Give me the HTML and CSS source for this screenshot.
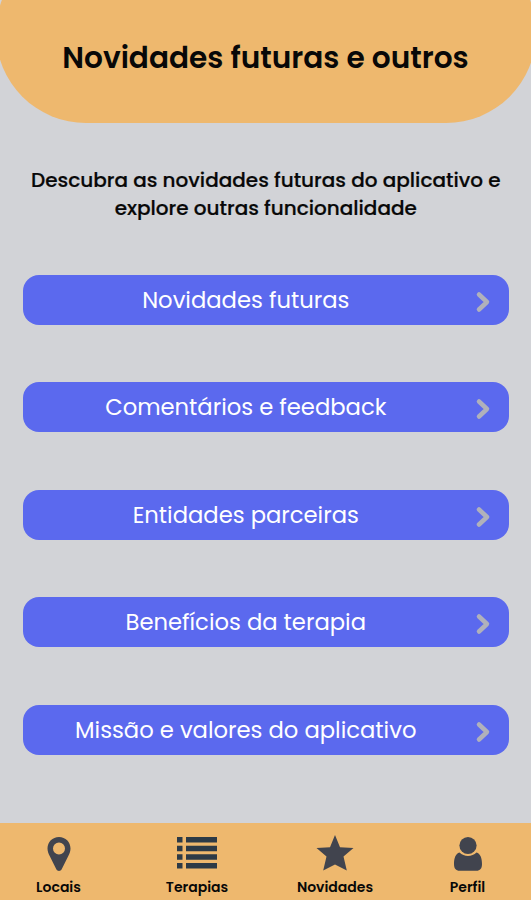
FILE: index.html
```html
<!DOCTYPE html>
<html lang="pt">
<head>
<meta charset="utf-8">
<title>Novidades futuras e outros</title>
<link rel="stylesheet" href="styles.css">
</head>
<body>
<header class="hero"><h1>Novidades futuras e outros</h1></header>
<main>
  <p class="intro">Descubra as novidades futuras do aplicativo e<br>explore outras funcionalidade</p>
  <div class="menu">
    <button><span>Novidades futuras</span><svg width="16" height="24" viewBox="0 0 16 24"><path d="M4 4.500l8 7.500-8 7.500"/></svg></button>
    <button><span>Comentários e feedback</span><svg width="16" height="24" viewBox="0 0 16 24"><path d="M4 4.500l8 7.500-8 7.500"/></svg></button>
    <button><span>Entidades parceiras</span><svg width="16" height="24" viewBox="0 0 16 24"><path d="M4 4.500l8 7.500-8 7.500"/></svg></button>
    <button><span>Benefícios da terapia</span><svg width="16" height="24" viewBox="0 0 16 24"><path d="M4 4.500l8 7.500-8 7.500"/></svg></button>
    <button><span>Missão e valores do aplicativo</span><svg width="16" height="24" viewBox="0 0 16 24"><path d="M4 4.500l8 7.500-8 7.500"/></svg></button>
  </div>
</main>
<nav>
  <a class="places"><svg width="40" height="40" viewBox="0 0 40 40"><path fill-rule="evenodd" d="M20 4C13.500 4 8.500 9 8.500 15.500c0 3 1 5 2.200 7.500l6.600 13.200c1.200 2.300 4.200 2.300 5.400 0L29.300 23c1.200-2.500 2.200-4.500 2.200-7.500C31.500 9 26.500 4 20 4zm0 5.500a6 6 0 1 1 0 12 6 6 0 0 1 0-12z"/></svg><span>Locais</span></a>
  <a class="therapies"><svg width="40" height="40" viewBox="0 0 40 40"><path d="M0 4h5.500v5.500H0zM9 4H40v5.500H9zM0 12.700h5.500v5.500H0zM9 12.700H40v5.500H9zM0 21.300h5.500v5.500H0zM9 21.300H40v5.500H9zM0 30h5.500v5.500H0zM9 30H40v5.500H9z"/></svg><span>Terapias</span></a>
  <a class="news"><svg width="40" height="40" viewBox="0 0 40 40"><path d="M20 2l5 12.200L38.500 15 28.500 23.500l3.300 14L20 31.500 8.200 37.500l3.300-14L1.500 15l13.500-.8z"/></svg><span>Novidades</span></a>
  <a class="profile"><svg width="40" height="40" viewBox="0 0 40 40"><circle cx="20" cy="12.500" r="8.600"/><path d="M11.500 19.500c4.500 4.600 12.500 4.600 17 0 4 1 5.500 6 5.500 11.500 0 4.500-2 6.800-5.500 6.800h-17C8 37.800 6 35.500 6 31c0-5.500 1.500-10.500 5.500-11.500z"/></svg><span>Perfil</span></a>
</nav>
</body>
</html>
```
FILE: styles.css
```css
* { box-sizing: border-box; }
body {
  margin: 0;
  width: 531px;
  height: 900px;
  overflow: hidden;
  display: flex;
  flex-direction: column;
  background: #d2d3d7;
  color: #080808;
  font-family: Poppins, Inter, "Liberation Sans", sans-serif;
}
.hero {
  flex: none;
  height: 180.500px;
  margin: -58px -4.500px 0;
  padding-top: 98px;
  border-radius: 90px;
  background: #eeb86e;
  text-align: center;
}
h1 { margin: 0; font-size: 29.600px; font-weight: 600; line-height: 36px; white-space: nowrap; }
main { flex: 1; padding: 43.500px 22.500px 0 23px; }
.intro { margin: 0; font-size: 20px; font-weight: 500; line-height: 28px; text-align: center; white-space: nowrap; -webkit-text-stroke: .2px; }
.menu { display: flex; flex-direction: column; gap: 57.500px; margin-top: 52.500px; }
button {
  display: flex;
  align-items: center;
  height: 50px;
  padding: 0 18px 0 0;
  border: 0;
  border-radius: 16px;
  background: #5b69ee;
  color: #fff;
  font: 400 22.700px/30px Poppins, Inter, sans-serif;
  white-space: nowrap;
}
button span { flex: 1; padding-right: 6px; text-align: center; }
button svg { margin-top: 4px; fill: none; stroke: #b0b1bb; stroke-width: 4.500; stroke-linecap: round; stroke-linejoin: round; }
nav {
  flex: none;
  display: grid;
  grid-template-columns: 117px 160px 116px 138px;
  height: 77px;
  background: #eeb86e;
}
nav a { display: flex; flex-direction: column; align-items: center; padding-top: 10px; font-size: 14px; font-weight: 600; line-height: 18px; }
nav svg { fill: #41444e; margin-bottom: 5px; }
.therapies svg { fill: #2d3a46; }
.profile { padding-left: 11px; }
```
